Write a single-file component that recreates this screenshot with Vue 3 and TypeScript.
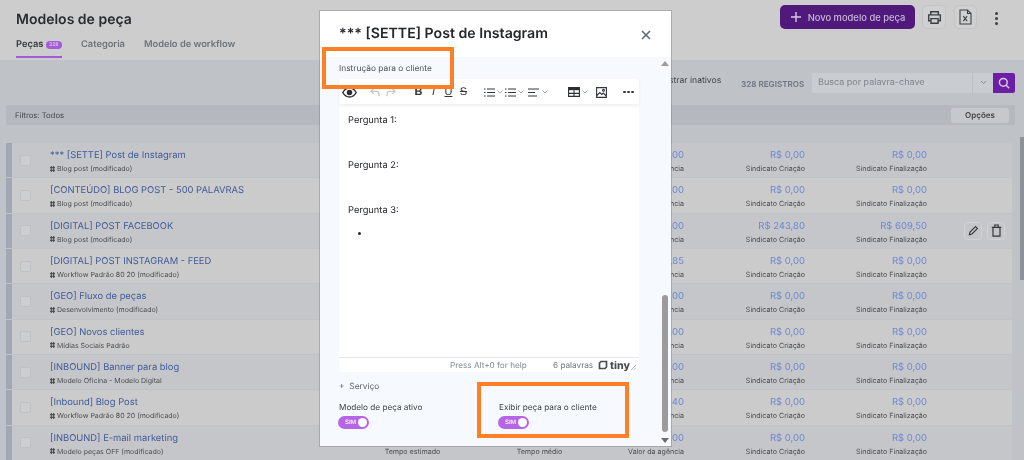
<script setup lang="ts">
interface Row {
  title: string
  sub: string
  value: string
  create: string
  finish: string
  hover?: boolean
}

const rows: Row[] = [
  { title: '*** [SETTE] Post de Instagram', sub: 'Blog post (modificado)', value: 'R$ 0,00', create: 'R$ 0,00', finish: 'R$ 0,00' },
  { title: '[CONTEÚDO] BLOG POST - 500 PALAVRAS', sub: 'Blog post (modificado)', value: 'R$ 0,00', create: 'R$ 0,00', finish: 'R$ 0,00' },
  { title: '[DIGITAL] POST FACEBOOK', sub: 'Blog post (modificado)', value: 'R$ 0,00', create: 'R$ 243,80', finish: 'R$ 609,50', hover: true },
  { title: '[DIGITAL] POST INSTAGRAM - FEED', sub: 'Workflow Padrão 80 20 (modificado)', value: 'R$ 0,85', create: 'R$ 0,00', finish: 'R$ 0,00' },
  { title: '[GEO] Fluxo de peças', sub: 'Desenvolvimento (modificado)', value: 'R$ 0,00', create: 'R$ 0,00', finish: 'R$ 0,00' },
  { title: '[GEO] Novos clientes', sub: 'Mídias Sociais Padrão', value: 'R$ 0,00', create: 'R$ 0,00', finish: 'R$ 0,00' },
  { title: '[INBOUND] Banner para blog', sub: 'Modelo Oficina - Modelo Digital', value: 'R$ 0,00', create: 'R$ 0,00', finish: 'R$ 0,00' },
  { title: '[Inbound] Blog Post', sub: 'Workflow Padrão 80 20 (modificado)', value: 'R$ 0,40', create: 'R$ 0,00', finish: 'R$ 0,00' },
  { title: '[INBOUND] E-mail marketing', sub: 'Modelo peças OFF (modificado)', value: 'R$ 0,00', create: 'R$ 0,00', finish: 'R$ 0,00' },
]
</script>

<template>
  <div class="page">
    <header class="top">
      <div class="top-left">
        <h1 class="page-title">Modelos de peça</h1>
        <nav class="tabs">
          <span class="tab active">Peças <span class="badge">328</span></span>
          <span class="tab">Categoria</span>
          <span class="tab">Modelo de workflow</span>
        </nav>
      </div>
      <div class="top-actions">
        <button class="primary">
          <svg width="12" height="12" viewBox="0 0 12 12"><path d="M6 1v10M1 6h10" stroke="#d8cbe3" stroke-width="1.4" fill="none" /></svg>
          Novo modelo de peça
        </button>
        <button class="square">
          <svg width="15" height="15" viewBox="0 0 16 16" fill="none" stroke="#3b3f46" stroke-width="1.5"><path d="M4 5V1.8h8V5M4 11.5H1.8V5.2h12.4v6.3H12" /><path d="M4.2 9.2h7.6v5H4.2z" /></svg>
        </button>
        <button class="square narrow">
          <svg width="13" height="16" viewBox="0 0 13 16" fill="none" stroke="#3b3f46" stroke-width="1.1"><path d="M1 1h7.5L12 4.5V15H1zM8.5 1v3.5H12" /><path d="M4.3 7.2l3.8 5M8.1 7.2l-3.8 5" /></svg>
        </button>
        <span class="kebab"><i></i><i></i><i></i></span>
      </div>
    </header>

    <section class="content">
      <div class="tools">
        <span class="inactive">Mostrar inativos</span>
        <span class="count">328 REGISTROS</span>
        <div class="search">
          <span class="search-text">Busca por palavra-chave</span>
          <span class="search-caret">
            <svg width="7" height="5" viewBox="0 0 7 5"><path d="M1 1l2.5 2.5L6 1" stroke="#8b9097" fill="none" /></svg>
          </span>
          <span class="search-btn">
            <svg width="12" height="12" viewBox="0 0 12 12" fill="none" stroke="#d9c9e6" stroke-width="1.5"><circle cx="5.3" cy="5.3" r="3.9" /><path d="M8.2 8.2l3 3" /></svg>
          </span>
        </div>
      </div>

      <div class="filters">
        <span>Filtros: Todos</span>
        <span class="options">Opções</span>
      </div>

      <div class="list">
        <div v-for="(row, i) in rows" :key="row.title" class="row" :class="{ light: i % 2 === 1 }">
          <span class="stripe"></span>
          <span class="check-cell"><span class="check"></span></span>
          <div class="main">
            <span class="row-title">{{ row.title }}</span>
            <span class="row-sub">
              <svg width="5" height="6" viewBox="0 0 5 6" fill="none" stroke="#3f4247" stroke-width="1"><path d="M0 1.7h5M0 4.3h5M1.3 0v6M3.7 0v6" /></svg>
              {{ row.sub }}
            </span>
          </div>
          <div class="cell centered"><span class="muted">—</span><span class="cap">Tempo estimado</span></div>
          <div class="cell centered gap-b"><span class="muted">—</span><span class="cap">Tempo médio</span></div>
          <div class="cell"><span class="money">{{ row.value }}</span><span class="cap">Valor da agência</span></div>
          <div class="cell"><span class="money">{{ row.create }}</span><span class="cap">Sindicato Criação</span></div>
          <div class="cell"><span class="money">{{ row.finish }}</span><span class="cap">Sindicato Finalização</span></div>
          <div class="row-actions">
            <template v-if="row.hover">
              <span class="mini">
                <svg width="11" height="11" viewBox="0 0 12 12" fill="none" stroke="#33363b" stroke-width="1.2"><path d="M1.5 10.5l.7-2.8 6-6 2.1 2.1-6 6z" /></svg>
              </span>
              <span class="mini">
                <svg width="11" height="13" viewBox="0 0 11 13" fill="none" stroke="#33363b" stroke-width="1.2"><path d="M2 3.4h7v8.8H2zM3.8 3.2V1h3.4v2.2M.8 3.4h9.4" /></svg>
              </span>
            </template>
          </div>
        </div>
      </div>
    </section>

    <div class="page-scroll"><span></span></div>

    <div class="modal">
      <div class="modal-head">
        <h2>*** [SETTE] Post de Instagram</h2>
        <svg width="10" height="10" viewBox="0 0 10 10"><path d="M1 1l8 8M9 1L1 9" stroke="#5c6570" stroke-width="1.5" fill="none" /></svg>
      </div>
      <div class="modal-body">
        <label class="field-label">Instrução para o cliente</label>
        <div class="editor">
          <div class="toolbar">
            <svg class="t-eye" width="15" height="11" viewBox="0 0 15 11" fill="none" stroke="#2b2e33" stroke-width="1.4"><path d="M.8 5.5C2.5 2.5 4.8 1 7.5 1s5 1.5 6.7 4.5C12.5 8.5 10.2 10 7.5 10S2.5 8.5.8 5.5z" /><circle cx="7.5" cy="5.5" r="2.1" fill="#2b2e33" /></svg>
            <svg class="t-undo" width="10" height="9" viewBox="0 0 10 9" fill="none" stroke="#b9bcc1" stroke-width="1.1"><path d="M3.5.8L1 3.3l2.5 2.5M1 3.3h5a3 3 0 0 1 3 3v2" /></svg>
            <svg class="t-redo" width="10" height="9" viewBox="0 0 10 9" fill="none" stroke="#b9bcc1" stroke-width="1.1"><path d="M6.5.8L9 3.3 6.5 5.8M9 3.3H4a3 3 0 0 0-3 3v2" /></svg>
            <b class="t-glyph t-b">B</b>
            <i class="t-glyph t-i">I</i>
            <u class="t-glyph t-u">U</u>
            <s class="t-glyph t-s">S</s>
            <svg class="t-l1" width="11" height="9" viewBox="0 0 11 9" stroke="#33363b" fill="none"><path d="M0 1h1.5M3 1h8M0 4.5h1.5M3 4.5h8M0 8h1.5M3 8h8" /></svg>
            <svg class="t-c" width="6" height="4" viewBox="0 0 6 4" stroke="#a9adb3" fill="none"><path d="M.5.5L3 3 5.5.5" /></svg>
            <svg class="t-l2" width="11" height="9" viewBox="0 0 11 9" stroke="#33363b" fill="none"><path d="M0 1h1.5M3 1h8M0 4.5h1.5M3 4.5h8M0 8h1.5M3 8h8" /></svg>
            <svg class="t-c" width="6" height="4" viewBox="0 0 6 4" stroke="#a9adb3" fill="none"><path d="M.5.5L3 3 5.5.5" /></svg>
            <svg class="t-l3" width="11" height="9" viewBox="0 0 11 9" stroke="#33363b" fill="none"><path d="M0 1h11M0 4.5h7M0 8h9" /></svg>
            <svg class="t-c t-c3" width="6" height="4" viewBox="0 0 6 4" stroke="#a9adb3" fill="none"><path d="M.5.5L3 3 5.5.5" /></svg>
            <svg class="t-table" width="12" height="10" viewBox="0 0 12 10" fill="none" stroke="#2b2e33" stroke-width="1.1"><path d="M.6.6h10.8v8.8H.6zM.6 6.4h10.8M6 3.3v6.1" /><path d="M.6 2h10.8" stroke-width="2.4" /></svg>
            <svg class="t-c" width="6" height="4" viewBox="0 0 6 4" stroke="#a9adb3" fill="none"><path d="M.5.5L3 3 5.5.5" /></svg>
            <svg class="t-img" width="11" height="11" viewBox="0 0 11 11" fill="none" stroke="#33363b" stroke-width="1.1"><path d="M.6.6h9.8v9.8H.6zM.8 8.5l3-3 2 2 1.5-1.5 3 3" /><circle cx="7.5" cy="3.3" r="1" /></svg>
            <span class="t-more"><i></i><i></i><i></i></span>
          </div>
          <div class="doc">
            <p>Pergunta 1:</p>
            <p class="spaced">Pergunta 2:</p>
            <p class="spaced">Pergunta 3:</p>
            <ul><li></li></ul>
          </div>
          <div class="status">
            <span class="help">Press Alt+0 for help</span>
            <span class="words">6 palavras</span>
            <span class="tiny">
              <svg width="10" height="10" viewBox="0 0 10 10" fill="none" stroke="#4a4d52" stroke-width="1.7"><path d="M3 1.5h5.5v5.5L7 8.5H1.5V3z" /></svg>
              tiny
            </span>
            <svg class="grip" width="5" height="5" viewBox="0 0 5 5" stroke="#9a9da2" stroke-width=".7"><path d="M0 5l5-5M2.5 5L5 2.5" /></svg>
          </div>
        </div>
        <div class="service">+&nbsp;&nbsp;Serviço</div>
        <div class="switches">
          <div class="switch-field">
            <span class="switch-label">Modelo de peça ativo</span>
            <span class="toggle">SIM<i></i></span>
          </div>
          <div class="switch-field">
            <span class="switch-label">Exibir peça para o cliente</span>
            <span class="toggle">SIM<i></i></span>
          </div>
        </div>
      </div>
      <div class="modal-scroll">
        <span class="arrow up"></span>
        <span class="thumb"></span>
        <span class="arrow down"></span>
      </div>
    </div>

    <div class="mark mark-a"></div>
    <div class="mark mark-b"></div>
  </div>
</template>

<style scoped>
.page {
  position: relative;
  width: 1024px;
  height: 460px;
  overflow: hidden;
  display: flex;
  flex-direction: column;
  background: #bfc2c7;
  font-family: Inter, "Liberation Sans", sans-serif;
  color: #27292d;
  text-rendering: geometricPrecision;
  filter: blur(0.4px);
}
.top {
  height: 60px;
  flex: none;
  background: #cdcdcd;
  display: flex;
  justify-content: space-between;
  padding: 0 26px 0 16px;
  box-sizing: border-box;
}
.page-title {
  margin: 11px 0 0;
  font-size: 14px;
  line-height: 17px;
  font-weight: 600;
  color: #2a2c31;
}
.tabs {
  display: flex;
  gap: 19px;
  margin-top: 11px;
}
.tab {
  font-size: 9.3px;
  line-height: 12px;
  font-weight: 600;
  color: #6d727a;
  height: 19px;
  box-sizing: border-box;
}
.tab.active {
  color: #33353a;
  border-bottom: 2px solid #a35bd8;
  width: 46px;
  white-space: nowrap;
}
.badge {
  display: inline-block;
  width: 16px;
  height: 8px;
  border-radius: 4px;
  background: #a35bd8;
  color: #d9c9e6;
  font-size: 5px;
  line-height: 8px;
  text-align: center;
  vertical-align: 1px;
}
.top-actions {
  display: flex;
  align-items: flex-start;
  margin-top: 5px;
}
.primary {
  width: 135px;
  height: 24px;
  border: 0;
  border-radius: 5px;
  background: #4f1a7c;
  color: #c9b8d8;
  font: 500 9.4px Inter, "Liberation Sans", sans-serif;
  display: flex;
  align-items: center;
  justify-content: center;
  gap: 6px;
  padding: 0;
}
.square {
  width: 24px;
  height: 24px;
  margin-left: 7px;
  border: 1px solid #c2c4c8;
  border-radius: 5px;
  background: #d0d0d0;
  display: flex;
  align-items: center;
  justify-content: center;
  padding: 0;
}
.square.narrow { margin-left: 8px; width: 23px; }
.kebab {
  width: 3px;
  margin: 7px 0 0 18px;
  display: flex;
  flex-direction: column;
  gap: 2px;
}
.kebab i {
  width: 3px;
  height: 3px;
  border-radius: 50%;
  background: #3b3f46;
}
.content {
  flex: 1;
  min-height: 0;
  padding-left: 6px;
}
.tools {
  height: 45px;
  display: flex;
  align-items: center;
  padding-top: 2px;
  box-sizing: border-box;
}
.inactive {
  margin-left: 650px;
  width: 65px;
  font-size: 8.6px;
  color: #42464d;
  white-space: nowrap;
  position: relative;
  top: -3px;
}
.count {
  margin-left: 20px;
  width: 71px;
  font-size: 8.1px;
  font-weight: 600;
  color: #6b7482;
  white-space: nowrap;
}
.search {
  width: 203px;
  height: 20px;
  display: flex;
  align-items: center;
  background: #c9ccd0;
  border-radius: 2px;
  position: relative;
  top: -1px;
}
.search-text {
  flex: 1;
  padding-left: 6px;
  font-size: 9px;
  color: #7e848c;
}
.search-caret {
  width: 21px;
  height: 100%;
  display: flex;
  align-items: center;
  justify-content: center;
  border-left: 1px solid #bcc0c5;
  box-sizing: border-box;
}
.search-btn {
  width: 22px;
  height: 100%;
  display: flex;
  align-items: center;
  justify-content: center;
  background: #6a1fa4;
  border-radius: 0 2px 2px 0;
}
.filters {
  width: 1009px;
  height: 20px;
  background: #b5b9bf;
  border-radius: 2px;
  display: flex;
  align-items: center;
  justify-content: space-between;
  padding: 0 6px 0 9px;
  box-sizing: border-box;
  font-size: 7.7px;
  color: #42464d;
}
.options {
  width: 58px;
  height: 15px;
  line-height: 15px;
  background: #c6c8cc;
  border-radius: 3px;
  text-align: center;
  font-weight: 600;
  font-size: 8px;
  color: #40444a;
}
.list {
  margin-top: 18px;
  width: 1006px;
}
.row {
  height: 35.33px;
  display: grid;
  grid-template-columns: 6px 38px 310px 105px 128px 91px 121px 122px 1fr;
  align-items: center;
  background: #c5c6c9;
  border-bottom: 1px solid #bfc2c6;
  box-sizing: border-box;
}
.row.light { background: #cbcbcb; }
.stripe {
  align-self: stretch;
  background: #a1a7b4;
}
.check-cell { padding-left: 8px; }
.check {
  display: block;
  width: 11px;
  height: 11px;
  box-sizing: border-box;
  border: 1px solid #bec0c4;
  border-radius: 2px;
  background: #cdcecf;
}
.main, .cell {
  display: flex;
  flex-direction: column;
  min-width: 0;
  padding-top: 2px;
}
.row-title {
  font-size: 9.4px;
  line-height: 13px;
  color: #3f5a99;
  white-space: nowrap;
}
.row-sub {
  margin-top: 2px;
  font-size: 7px;
  line-height: 9px;
  color: #4a4d52;
  display: flex;
  align-items: center;
  gap: 2px;
  white-space: nowrap;
}
.cell {
  align-items: flex-end;
}
.cell.centered { align-items: center; }
.gap-b { padding-left: 21px; }
.money {
  font-size: 9.5px;
  line-height: 13px;
  color: #6c88d4;
  white-space: nowrap;
}
.muted {
  font-size: 9.5px;
  line-height: 13px;
  color: #8b9097;
}
.cap {
  margin-top: 2px;
  font-size: 7.1px;
  line-height: 9px;
  color: #4a4d52;
  white-space: nowrap;
}
.row-actions {
  display: flex;
  justify-content: flex-end;
  gap: 5px;
  padding-right: 7px;
}
.mini {
  width: 18px;
  height: 18px;
  border: 1px solid #d2d3d5;
  border-radius: 4px;
  display: flex;
  align-items: center;
  justify-content: center;
  box-sizing: border-box;
}
.page-scroll {
  position: absolute;
  top: 60px;
  right: 0;
  bottom: 0;
  width: 8px;
  background: #bfc2c7;
}
.page-scroll span {
  position: absolute;
  top: 77px;
  left: 4px;
  width: 4px;
  height: 143px;
  background: #8d9198;
}
.modal {
  position: absolute;
  left: 320px;
  top: 11px;
  width: 351px;
  height: 435px;
  background: #f6f9fd;
  box-shadow: 0 0 0 1px rgba(110, 110, 110, 0.35);
  display: flex;
  flex-direction: column;
}
.modal-head {
  height: 46px;
  flex: none;
  background: #fff;
  display: flex;
  align-items: center;
  justify-content: space-between;
  padding: 0 20px 2px 19px;
  box-sizing: border-box;
}
.modal-head svg { margin-top: 4px; }
.modal-head h2 {
  margin: 0;
  font-size: 14.15px;
  font-weight: 600;
  color: #25272b;
  white-space: nowrap;
}
.modal-body {
  padding: 6px 32px 0 19px;
  flex: 1;
  min-height: 0;
}
.field-label {
  display: block;
  font-size: 8.35px;
  line-height: 12px;
  color: #4b4f55;
}
.editor {
  margin-top: 4px;
  height: 293px;
  background: #fff;
  border-radius: 4px;
  display: flex;
  flex-direction: column;
}
.toolbar {
  height: 25px;
  flex: none;
  display: flex;
  align-items: center;
  box-shadow: 0 2px 3px rgba(40, 50, 70, 0.08);
  padding: 1px 0 0 3px;
  box-sizing: border-box;
}
.toolbar svg { flex: none; }
.t-undo { margin-left: 13px; }
.t-redo { margin-left: 6px; }
.t-glyph {
  font-family: "Liberation Sans", sans-serif;
  font-size: 11px;
  line-height: 12px;
  color: #33363b;
  width: 9px;
  text-align: center;
}
.t-b { margin-left: 18px; }
.t-i { margin-left: 6px; }
.t-u { margin-left: 6px; }
.t-s { margin-left: 6px; }
.t-l1 { margin-left: 16px; }
.t-c { margin-left: 2px; }
.t-l2 { margin-left: 2px; }
.t-l3 { margin-left: 4px; }
.t-c3 { margin-left: 3px; }
.t-table { margin-left: 20px; }
.t-img { margin-left: 8px; }
.t-more {
  margin-left: 16px;
  display: flex;
  gap: 1.5px;
}
.t-more i {
  width: 2.5px;
  height: 2.5px;
  border-radius: 50%;
  background: #33363b;
}
.doc {
  flex: 1;
  padding: 10px 9px 0;
  font-size: 9.3px;
  line-height: 14px;
  color: #26282c;
}
.doc p { margin: 0; }
.doc p.spaced { margin-top: 31px; }
.doc ul { margin: 9px 0 0; padding-left: 22px; }
.doc li { height: 14px; }
.status {
  height: 14px;
  flex: none;
  border-top: 1px solid #e4e6ea;
  display: flex;
  align-items: center;
  font-size: 8.2px;
  color: #85898f;
  position: relative;
}
.help { margin-left: 111px; width: 103px; white-space: nowrap; }
.words { width: 45px; white-space: nowrap; color: #6f7379; }
.tiny {
  display: flex;
  align-items: center;
  gap: 2px;
  font-size: 10.5px;
  font-weight: 800;
  color: #4a4d52;
}
.grip { position: absolute; right: 3px; bottom: 2px; }
.service {
  margin-top: 9px;
  font-size: 8.4px;
  line-height: 12px;
  color: #5d6168;
}
.switches {
  margin-top: 8px;
  display: grid;
  grid-template-columns: 160px 1fr;
}
.switch-field {
  display: flex;
  flex-direction: column;
  align-items: flex-start;
}
.switch-label {
  font-size: 8.2px;
  line-height: 12px;
  color: #3d4147;
}
.toggle {
  position: relative;
  margin: 3px 0 0 -1px;
  width: 31px;
  height: 13px;
  border-radius: 7px;
  background: #b565e8;
  color: #efe2f9;
  font-size: 6px;
  font-weight: 700;
  line-height: 13px;
  padding-left: 7px;
  box-sizing: border-box;
}
.toggle i {
  position: absolute;
  right: 2px;
  top: 2px;
  width: 9px;
  height: 9px;
  border-radius: 50%;
  background: #fff;
}
.modal-scroll {
  position: absolute;
  right: 2px;
  top: 46px;
  bottom: 0;
  width: 8px;
}
.thumb {
  position: absolute;
  left: 1px;
  right: 1px;
  top: 238px;
  height: 137px;
  border-radius: 3px;
  background: #9b9b9b;
}
.arrow {
  position: absolute;
  left: 0;
  width: 0;
  height: 0;
  border-left: 4px solid transparent;
  border-right: 4px solid transparent;
}
.arrow.up { top: 4px; border-bottom: 5px solid #9d9d9d; }
.arrow.down { bottom: 3px; border-top: 5px solid #6d6d6d; }
.mark {
  position: absolute;
  border: 4px solid #ff7f27;
  box-sizing: border-box;
}
.mark-a { left: 322px; top: 47px; width: 132px; height: 42px; }
.mark-b { left: 477px; top: 382px; width: 152px; height: 56px; }
</style>
